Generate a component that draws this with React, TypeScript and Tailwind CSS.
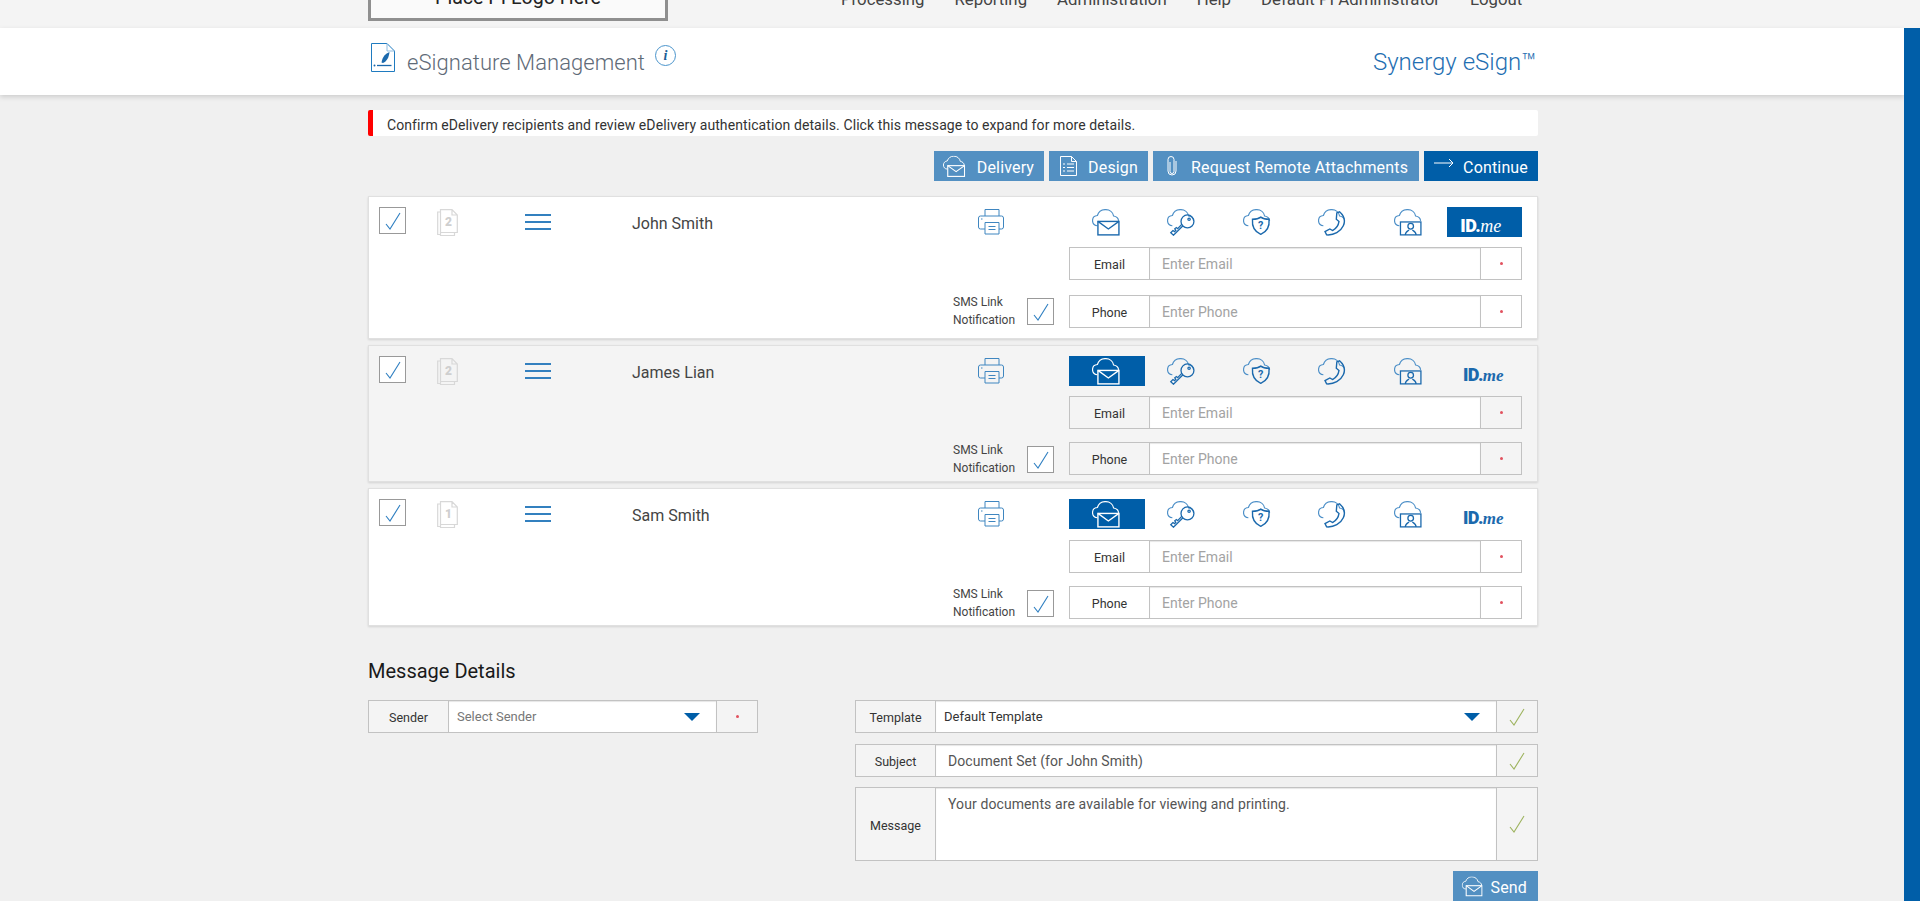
import type { ReactNode } from 'react';

const CLOUD = 'M5 15.5C2.2 15.5.5 13.4.5 10.8.5 8.2 2.4 6.2 5 6 6 2.6 9 .5 12.5.5c3.9 0 7 2.5 7.6 6 2.5.4 4.4 2.2 4.6 4.5';

function CloudIcon({ active, children }: { active?: boolean; children: ReactNode }) {
  return (
    <svg viewBox="0 0 26 25" fill="none" className={active ? 'w-[28px] h-[27px] mr-[2px] text-white' : 'w-[28px] h-[27px] mr-[2px] text-[#1b69ad]'}>
      <path d={CLOUD} stroke={active ? '#ffffff' : '#4e90c8'} strokeWidth="1.1" />
      {children}
    </svg>
  );
}

function MailGlyph() {
  return (
    <g stroke="currentColor" strokeWidth="1.3" fill="none">
      <rect x="5.5" y="11.5" width="19.5" height="12.5" fill="none" />
      <path d="M5.5 11.5l9.7 7 9.8-7" />
    </g>
  );
}

function MailIcon({ active }: { active?: boolean }) {
  return (
    <CloudIcon active={active}>
      <MailGlyph />
    </CloudIcon>
  );
}

function KeyIcon() {
  return (
    <CloudIcon>
      <g stroke="currentColor" strokeWidth="1.2" fill="none">
        <circle cx="19" cy="11.5" r="6" />
        <circle cx="20.5" cy="9.5" r="1.1" />
        <path d="M14.8 15.5L6 24.3 3.5 22 5.5 20l1.500 1 1.200-1.200-1-1.400 1.500-1.200 1.200 1 4.200-4.400" />
      </g>
    </CloudIcon>
  );
}

function ShieldIcon() {
  return (
    <CloudIcon>
      <path d="M16.500 7.500c1.800 1.400 4.500 2 7.700 2 .6 6.500-1.800 11.500-7.700 14-5.900-2.500-8.300-7.500-7.700-14 3.200 0 5.900-.6 7.700-2z" stroke="currentColor" strokeWidth="1.300" fill="none" />
      <text x="16.500" y="19" textAnchor="middle" fontSize="10" fontWeight="700" fill="currentColor" fontFamily="Roboto, sans-serif">?</text>
    </CloudIcon>
  );
}

function PhoneIcon() {
  return (
    <CloudIcon>
      <path d="M17.500 3.500L20 2.500c4 3.500 5.500 8.500 3.500 13C21 21 15 24.500 8 24L6.500 21l4.500-2.500 2.500 1.500c3-1.500 5.500-5 6-8.500L17 9.500z" stroke="currentColor" strokeWidth="1.300" fill="none" />
    </CloudIcon>
  );
}

function VideoIcon() {
  return (
    <CloudIcon>
      <g stroke="currentColor" strokeWidth="1.2" fill="none">
        <rect x="6" y="12" width="19" height="12" />
        <circle cx="15.500" cy="16" r="2.600" />
        <path d="M10.500 24c0-3 2-3.500 3.500-4.500M20.500 24c0-3-2-3.500-3.500-4.500" />
      </g>
    </CloudIcon>
  );
}

function IdMe({ active }: { active?: boolean }) {
  return (
    <span className={active ? 'flex items-baseline leading-none pt-[8px] mr-[7px]' : 'flex items-baseline leading-none pt-[8px] mr-[2px]'}>
      <span className="text-[18px] font-black tracking-[-0.5px]">ID.</span>
      <span className={active ? "font-['Liberation_Serif',serif] italic text-[18px]" : "font-['Liberation_Serif',serif] italic text-[17px] font-bold"}>me</span>
    </span>
  );
}

function Check({ color = '#2f7fc1' }: { color?: string }) {
  return (
    <svg viewBox="0 0 16 18" fill="none" className="w-[16px] h-[18px]">
      <path d="M1 12l4 5L15 1" stroke={color} strokeWidth="1.1" />
    </svg>
  );
}

function CheckBox() {
  return (
    <div className="w-[27px] h-[27px] shrink-0 border border-[#999] bg-white flex items-center justify-center">
      <Check />
    </div>
  );
}

function PagesIcon({ count }: { count: number }) {
  return (
    <svg viewBox="0 0 21 27" fill="none" className="w-[21px] h-[27px] mt-[2px] ml-[31px] shrink-0">
      <path d="M3.500 25.500H.7V3H3.500M3.500 23.500V26.500H17.500V24" stroke="#d8d8d8" strokeWidth="1.200" />
      <path d="M3.500 .7H15L20.300 6V23.500H3.500zM15 .7V6h5.300" stroke="#d8d8d8" strokeWidth="1.200" />
      <text x="11.500" y="17" textAnchor="middle" fontSize="12" fontWeight="900" fill="#cfcfcf" fontFamily="Roboto, sans-serif">{count}</text>
    </svg>
  );
}

function Hamburger() {
  return (
    <div className="w-[26px] mt-[7px] ml-[67px] shrink-0 flex flex-col gap-[5px]">
      <div className="h-[2px] bg-[#3380bf]" />
      <div className="h-[2px] bg-[#3380bf]" />
      <div className="h-[2px] bg-[#3380bf]" />
    </div>
  );
}

function PrinterIcon() {
  return (
    <svg viewBox="0 0 26 26" fill="none" stroke="#3f86c0" strokeWidth="1" className="w-[26px] h-[26px] mt-[2px] shrink-0">
      <path d="M7 7V.5h14V7" />
      <path d="M7 20H2.500a2 2 0 01-2-2V9a2 2 0 012-2h21a2 2 0 012 2v9a2 2 0 01-2 2H21" />
      <path d="M7 13.500h14v11.500H7z" />
      <path d="M10.500 17.500h7M10.500 20.500h7" />
      <path d="M3 10h1.500" />
    </svg>
  );
}

function RedDot() {
  return <div className="w-[3px] h-[3px] rounded-full bg-[#e2525f]" />;
}

function FieldRow({
  label,
  white,
  labelW = 'w-[80px]',
  endW = 'w-[41px]',
  h = 'h-[33px]',
  end,
  children,
}: {
  label: string;
  white?: boolean;
  labelW?: string;
  endW?: string;
  h?: string;
  end?: ReactNode;
  children: ReactNode;
}) {
  const cellBg = white ? 'bg-white' : 'bg-[#f4f4f4]';
  return (
    <div className={`flex ${h} border border-[#c2c2c2]`}>
      <div className={`${labelW} ${cellBg} shrink-0 flex items-center justify-center pt-[4px] text-[12.5px] text-[#333] border-r border-[#c2c2c2]`}>
        {label}
      </div>
      <div className="flex-1 min-w-0 bg-white shadow-[inset_0_1px_1px_rgba(0,0,0,0.1)]">{children}</div>
      <div className={`${endW} ${cellBg} shrink-0 flex items-center justify-center border-l border-[#c2c2c2]`}>
        {end ?? <RedDot />}
      </div>
    </div>
  );
}

function Placeholder({ text }: { text: string }) {
  return <div className="h-full flex items-center pl-[12px] pt-[2px] text-[14px] text-[#a3a3a3]">{text}</div>;
}

function Arrow() {
  return (
    <svg viewBox="0 0 16 8" className="w-[16px] h-[8px]">
      <path d="M0 0h16L8 8z" fill="#005ea8" />
    </svg>
  );
}

function RecipientCard({
  name,
  pages,
  active,
  first,
  last,
  tinted,
}: {
  name: string;
  pages: number;
  active: 'mail' | 'id';
  first?: boolean;
  last?: boolean;
  tinted?: boolean;
}) {
  const tabOn = 'bg-[#005ea8] text-white flex items-center justify-center';
  const tabOff = 'text-[#1b69ad] flex items-center justify-center';
  return (
    <div className={`flex border border-[#e0e0e0] shadow-[0_1px_2px_rgba(0,0,0,0.12)] pt-[10px] ${first ? 'pb-[10px]' : 'pb-[6px]'} pr-[15px] ${tinted ? 'bg-[#f4f4f4]' : 'bg-white'}`}>
      {/* left side */}
      <div className="flex-1 flex flex-col justify-between">
        <div className="flex pl-[10px]">
          <CheckBox />
          <PagesIcon count={pages} />
          <Hamburger />
          <div className="w-[346px] ml-[81px] mt-[5px] h-[24px] text-[16px] leading-[24px] text-[#444] shrink-0">{name}</div>
          <PrinterIcon />
        </div>
        <div className={`flex justify-end items-center gap-[10px] h-[33px] pr-[15px] ${first ? '' : '-mb-[1px]'}`}>
          <div className="text-[12px] leading-[18px] text-[#444] w-[64px] -mt-[1px] whitespace-nowrap">
            SMS Link
            <br />
            Notification
          </div>
          <CheckBox />
        </div>
      </div>

      {/* right side */}
      <div className="w-[453px] shrink-0">
        <div className="grid grid-cols-6 h-[30px]">
          <div className={active === 'mail' ? tabOn : tabOff}>
            <MailIcon active={active === 'mail'} />
          </div>
          <div className={tabOff}>
            <KeyIcon />
          </div>
          <div className={tabOff}>
            <ShieldIcon />
          </div>
          <div className={tabOff}>
            <PhoneIcon />
          </div>
          <div className={tabOff}>
            <VideoIcon />
          </div>
          <div className={active === 'id' ? tabOn : tabOff}>
            <IdMe active={active === 'id'} />
          </div>
        </div>
        <div className={last ? 'mt-[11px]' : 'mt-[10px]'}>
          <FieldRow label="Email" white={!tinted}>
            <Placeholder text="Enter Email" />
          </FieldRow>
        </div>
        <div className={first ? 'mt-[15px]' : 'mt-[13px]'}>
          <FieldRow label="Phone" white={!tinted}>
            <Placeholder text="Enter Phone" />
          </FieldRow>
        </div>
      </div>
    </div>
  );
}

function ToolButton({ className, children }: { className: string; children: ReactNode }) {
  return <div className={`h-[30px] flex items-center pt-[4px] text-[16px] tracking-[0.16px] text-white ${className}`}>{children}</div>;
}

export default function App() {
  return (
    <div className="h-[901px] w-full overflow-hidden bg-[#f0f0f0] font-[Roboto,sans-serif]">
      {/* top nav, scrolled partly out of view */}
      <div className="h-[28px] bg-[#f4f4f4] overflow-hidden">
        <div className="ml-[368px] w-[1170px] flex">
          <div className="w-[300px] h-[41px] -mt-[20px] pb-[5px] shrink-0 border-[3px] border-[#8f8f8f] bg-[#fafafa] flex items-center justify-center text-[19.6px] text-[#222]">
            Place PI Logo Here
          </div>
          <div className="flex gap-[30px] ml-[173px] -mt-[13px] h-[24px] text-[16.8px] leading-[24px] text-[#444] whitespace-nowrap">
            <span>Processing</span>
            <span>Reporting</span>
            <span>Administration</span>
            <span>Help</span>
            <span>Default PI Administrator</span>
            <span>Logout</span>
          </div>
        </div>
      </div>

      <div className="flex h-[873px]">
        <div className="flex-1 min-w-0">
          {/* title bar */}
          <div className="h-[67px] bg-white shadow-[0_2px_5px_rgba(0,0,0,0.15)]">
            <div className="ml-[368px] w-[1170px] h-full flex">
              <svg viewBox="0 0 24 29" fill="none" className="w-[24px] h-[29px] ml-[3px] mt-[15px] shrink-0">
                <path d="M.5.5H16L23.500 8V28.500H.5z" stroke="#1f7bc0" />
                <path d="M16 .5V8h7.500" stroke="#8dbbe0" />
                <path d="M18.500 9c-4 1.500-7 4.500-8 10.500l1.500.5c4-2 6-6 6.500-11z" fill="#1b69ad" />
                <path d="M6 22.500h14.500" stroke="#1b69ad" strokeWidth="1.300" />
                <circle cx="3.500" cy="22.500" r="1" fill="#1b69ad" />
              </svg>
              <div className="ml-[12px] mt-[22px] h-[26px] text-[22px] leading-[26px] tracking-[0.05px] font-light text-[#5f6b78] whitespace-nowrap">
                eSignature Management
              </div>
              <div className="w-[21px] h-[21px] ml-[10px] mt-[17px] rounded-full border border-[#4b95cc] flex items-center justify-center font-['Liberation_Serif',serif] italic font-bold text-[14px] text-[#1b5e96]">
                i
              </div>
              <div className="ml-auto mr-[2px] mt-[20px] h-[28px] text-[24px] leading-[28px] font-light text-[#1f6fb2] whitespace-nowrap">
                Synergy eSign™
              </div>
            </div>
          </div>

          <div className="ml-[368px] w-[1170px]">
            {/* alert */}
            <div className="mt-[15px] h-[26px] bg-white border-l-[5px] border-[#ff0000] rounded-[2px] flex items-center pl-[14px] pt-[4px] text-[14px] tracking-[0.09px] text-[#333]">
              Confirm eDelivery recipients and review eDelivery authentication details. Click this message to expand for more details.
            </div>

            {/* actions */}
            <div className="mt-[15px] flex justify-end gap-[5px]">
              <ToolButton className="bg-[#5390c2] pl-[10px] pr-[10px] gap-[11px]">
                <div className="scale-[0.8] -mx-[4px] -mt-[4px]">
                  <MailIcon active />
                </div>
                <span>Delivery</span>
              </ToolButton>
              <ToolButton className="bg-[#5390c2] pl-[11px] pr-[10px] gap-[11px]">
                <svg viewBox="0 0 17 20" fill="none" stroke="#ffffff" strokeWidth="1" className="w-[17px] h-[20px] -mt-[4px]">
                  <path d="M.5.5H11.500L16.500 5.500V19.500H.5z" />
                  <path d="M11.500.5v5h5" />
                  <path d="M3 8h2M7 8h7M3 11.500h2M7 11.500h7M3 15h2M7 15h7" />
                </svg>
                <span>Design</span>
              </ToolButton>
              <ToolButton className="bg-[#5390c2] pl-[14px] pr-[11px] gap-[14px]">
                <svg viewBox="0 0 10 20" fill="none" stroke="#ffffff" strokeWidth="1" className="w-[10px] h-[20px] -mt-[4px]">
                  <path d="M3 6v9.500a2 2 0 004 0V3.500a3 3 0 00-6 0V15a4 4 0 008 0V5" />
                </svg>
                <span>Request Remote Attachments</span>
              </ToolButton>
              <ToolButton className="bg-[#005ea8] pl-[10px] pr-[10px] gap-[9px]">
                <svg viewBox="0 0 20 10" fill="none" stroke="#ffffff" strokeWidth="1" className="w-[20px] h-[10px] -mt-[10px]">
                  <path d="M0 5h19M15 1l4 4-4 4" />
                </svg>
                <span>Continue</span>
              </ToolButton>
            </div>

            {/* recipients */}
            <div className="mt-[15px]">
              <RecipientCard name="John Smith" pages={2} active="id" first />
            </div>
            <div className="mt-[6px]">
              <RecipientCard name="James Lian" pages={2} active="mail" tinted />
            </div>
            <div className="mt-[6px]">
              <RecipientCard name="Sam Smith" pages={1} active="mail" last />
            </div>

            {/* message details */}
            <div className="mt-[31px] h-[28px] text-[20px] leading-[28px] text-[#1a1a1a]">Message Details</div>
            <div className="mt-[15px] flex justify-between items-start">
              <div className="w-[390px]">
                <FieldRow label="Sender">
                  <div className="h-full flex items-center justify-between pl-[8px] pr-[16px] text-[13px] text-[#777]">
                    <span>Select Sender</span>
                    <Arrow />
                  </div>
                </FieldRow>
              </div>

              <div className="w-[683px]">
                <FieldRow label="Template" end={<Check color="#9db35e" />}>
                  <div className="h-full flex items-center justify-between pl-[8px] pr-[16px] text-[13px] text-[#333]">
                    <span>Default Template</span>
                    <Arrow />
                  </div>
                </FieldRow>
                <div className="mt-[11px]">
                  <FieldRow label="Subject" end={<Check color="#9db35e" />}>
                    <div className="h-full flex items-center pl-[12px] pt-[1px] text-[14px] tracking-[0.06px] text-[#555]">Document Set (for John Smith)</div>
                  </FieldRow>
                </div>
                <div className="mt-[10px]">
                  <FieldRow label="Message" h="h-[74px]" end={<Check color="#9db35e" />}>
                    <div className="pl-[12px] pt-[6px] text-[14px] leading-[20px] tracking-[0.1px] text-[#555]">
                      Your documents are available for viewing and printing.
                    </div>
                  </FieldRow>
                </div>
                <div className="mt-[10px] flex justify-end">
                  <ToolButton className="bg-[#5390c2] pl-[10px] pr-[11px] gap-[8px]">
                    <div className="scale-[0.75] -mx-[5px] -mt-[4px]">
                      <MailIcon active />
                    </div>
                    <span>Send</span>
                  </ToolButton>
                </div>
              </div>
            </div>
          </div>
        </div>

        {/* right edge strip */}
        <div className="w-[16px] shrink-0 bg-[#005ea8]" />
      </div>
    </div>
  );
}
